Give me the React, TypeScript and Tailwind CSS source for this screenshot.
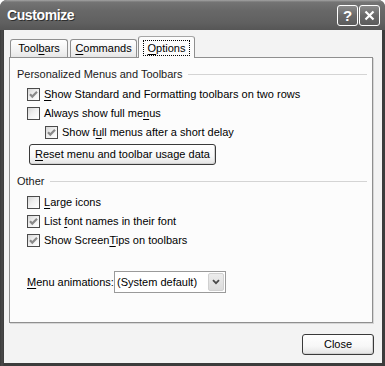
import React from "react";

function CheckBox({ checked }: { checked?: boolean }) {
  return (
    <span className="flex h-[13px] w-[13px] shrink-0 items-center justify-center border border-[#4b4b4b] bg-[linear-gradient(135deg,#d6d6d6_0%,#efefef_45%,#ffffff_100%)]">
      {checked && (
        <svg width="9" height="9" viewBox="0 0 9 9" fill="none">
          <path d="M1 4.2 3.3 6.6 8 1.8" stroke="#8a8a8a" strokeWidth="2.2" />
        </svg>
      )}
    </span>
  );
}

function CheckRow({
  checked,
  indent,
  children,
}: {
  checked?: boolean;
  indent?: boolean;
  children: React.ReactNode;
}) {
  return (
    <div className={`flex h-[19px] items-center ${indent ? "pl-[35px]" : "pl-[17px]"}`}>
      <CheckBox checked={checked} />
      <span className="ml-[4px] whitespace-nowrap">{children}</span>
    </div>
  );
}

function GroupHeader({ title }: { title: string }) {
  return (
    <div className="flex h-[19px] items-center pl-[7px] pr-[5px]">
      <span className="whitespace-nowrap text-[#1a1a1a]">{title}</span>
      <span className="ml-[5px] h-px flex-1 bg-[#d4d4d4]" />
    </div>
  );
}

const U = ({ children }: { children: React.ReactNode }) => (
  <span className="underline decoration-1 underline-offset-[2px]">{children}</span>
);

function XpButton({ className, children }: { className: string; children: React.ReactNode }) {
  return (
    <button className={`flex items-center justify-center rounded-[3px] border border-[#3a3a3a] bg-[linear-gradient(#ffffff_0%,#f7f7f7_60%,#e4e4e4_100%)] shadow-[inset_-1px_-1px_0_#d2d2d2] ${className}`}>
      {children}
    </button>
  );
}

export default function App() {
  return (
    <div className="h-[366px] w-[385px] bg-white font-['Liberation_Sans',sans-serif] text-[11px] leading-[13px] text-black">
      <div className="flex h-full flex-col overflow-hidden rounded-t-[7px] bg-[linear-gradient(90deg,#3a3a3a,#4a4a4a_2px,#3c3c3c_4px)]">
        {/* title bar */}
        <div className="flex h-[30px] shrink-0 items-center bg-[linear-gradient(#a4a4a4_0%,#747474_7%,#686868_35%,#606060_75%,#565656_100%)] pl-[7px] pr-[5px]">
          <span className="flex-1 text-[14px] font-bold tracking-[-0.4px] text-white [text-shadow:1px_1px_0_#2e2e2e]">
            Customize
          </span>
          <div className="flex gap-[1px]">
            <span className="flex h-[21px] w-[21px] items-center justify-center rounded-[3px] border border-white bg-[linear-gradient(#8a8a8a,#6a6a6a_50%,#5c5c5c)] text-[15px] font-bold leading-none text-white">
              ?
            </span>
            <span className="flex h-[21px] w-[21px] items-center justify-center rounded-[3px] border border-white bg-[linear-gradient(#8a8a8a,#6a6a6a_50%,#5c5c5c)]">
              <svg width="11" height="11" viewBox="0 0 11 11">
                <path d="M1.5 1.5 9.5 9.5M9.5 1.5 1.5 9.5" stroke="white" strokeWidth="2.2" />
              </svg>
            </span>
          </div>
        </div>

        {/* body */}
        <div className="mb-[3px] ml-[4px] mr-[3px] flex flex-1 flex-col bg-[#f3f3f3] pl-[5px] pr-[9px] pt-[6px]">
          {/* tabs */}
          <div className="flex h-[21px] items-end pl-[1px]">
            <div className="flex h-[18px] w-[58px] items-center justify-center rounded-t-[3px] border border-b-0 border-[#8f8f8f] bg-[linear-gradient(#ffffff,#f0f0f0_70%,#e6e6e6)]">
              Tool<U>b</U>ars
            </div>
            <div className="ml-[2px] flex h-[18px] w-[67px] items-center justify-center rounded-t-[3px] border border-b-0 border-[#8f8f8f] bg-[linear-gradient(#ffffff,#f0f0f0_70%,#e6e6e6)]">
              <U>C</U>ommands
            </div>
            <div className="relative z-10 -mb-px ml-[1px] flex h-[22px] w-[57px] items-start justify-center rounded-t-[3px] border border-b-0 border-[#8f8f8f] border-t-[#a6a6a6] bg-[#fcfcfc] pt-[3px]">
              <span className="flex h-[16px] items-center border border-dotted border-black px-[4px]">
                <U>O</U>ptions
              </span>
            </div>
          </div>

          {/* panel */}
          <div className="flex h-[266px] flex-col border border-[#8f8f8f] bg-[#fcfcfc] pt-[7px] shadow-[1px_1px_0_#d6d6d6]">
            <GroupHeader title="Personalized Menus and Toolbars" />
            <div className="mt-[1px]">
              <CheckRow checked>
                <U>S</U>how Standard and Formatting toolbars on two rows
              </CheckRow>
              <CheckRow>
                Always show full me<U>n</U>us
              </CheckRow>
              <CheckRow checked indent>
                Show f<U>u</U>ll menus after a short delay
              </CheckRow>
            </div>
            <XpButton className="ml-[19px] mt-[2px] h-[21px] w-[187px]">
              <span>
                <U>R</U>eset menu and toolbar usage data
              </span>
            </XpButton>

            <div className="mt-[7px]">
              <GroupHeader title="Other" />
            </div>
            <div className="mt-[2px]">
              <CheckRow>
                <U>L</U>arge icons
              </CheckRow>
              <CheckRow checked>
                List <U>f</U>ont names in their font
              </CheckRow>
              <CheckRow checked>
                Show Screen<U>T</U>ips on toolbars
              </CheckRow>
            </div>

            <div className="mt-[21px] flex h-[22px] items-center pl-[17px]">
              <span className="w-[87px] whitespace-nowrap">
                <U>M</U>enu animations:
              </span>
              <div className="flex h-[22px] w-[112px] items-center border border-[#9a9a9a] bg-white pl-[2px] pr-[1px]">
                <span className="flex-1 whitespace-nowrap">(System default)</span>
                <span className="flex h-[18px] w-[16px] items-center justify-center rounded-[2px] border border-[#d0d0d0] bg-[linear-gradient(#ececec,#dcdcdc)]">
                  <svg width="8" height="6" viewBox="0 0 8 6">
                    <path d="M1 1.2 4 4.2 7 1.2" stroke="#4a4a4a" strokeWidth="1.8" fill="none" />
                  </svg>
                </span>
              </div>
            </div>
          </div>

          {/* footer */}
          <div className="mt-[11px] flex justify-end">
            <XpButton className="-mr-px h-[21px] w-[72px]">Close</XpButton>
          </div>
        </div>
      </div>
    </div>
  );
}
